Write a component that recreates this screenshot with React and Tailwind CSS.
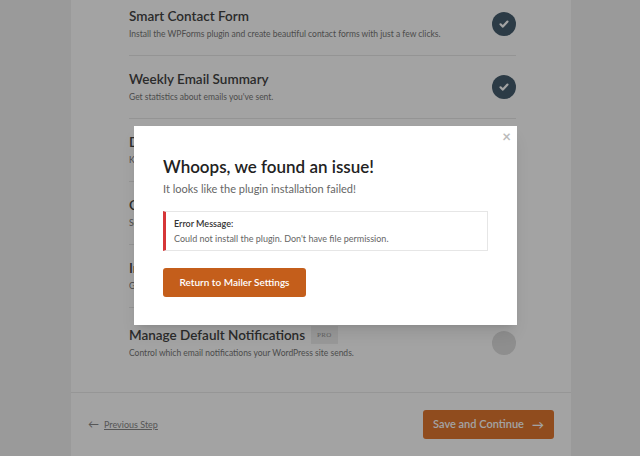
import React from 'react';

const rows = [
  { title: 'Smart Contact Form', desc: 'Install the WPForms plugin and create beautiful contact forms with just a few clicks.', on: true },
  { title: 'Weekly Email Summary', desc: "Get statistics about emails you've sent.", on: true },
  { title: 'Detailed Email Logs', desc: 'Keep records of all emails sent from your WordPress site.', on: true },
  { title: 'Complete Email Reports', desc: 'See the delivery status, track opens and clicks, and create deliverability graphs.', on: true },
  { title: 'Instant Email Alerts', desc: 'Get notifications via email, SMS, Slack, or webhook when emails fail to send.', on: true },
];

const Check = ({ on }) =>
  on ? (
    <div className="w-6 h-6 rounded-full bg-[#465d6e] flex items-center justify-center">
      <svg width="12" height="12" viewBox="0 0 12 12" fill="none" stroke="white" strokeWidth="2.2" strokeLinecap="round" strokeLinejoin="round">
        <path d="M2.5 6.3l2.4 2.3 4.6-5" />
      </svg>
    </div>
  ) : (
    <div className="w-6 h-6 rounded-full bg-[#dedede]" />
  );

const App = () => {
  return (
    <div className="relative w-[640px] h-[456px] overflow-hidden bg-[#f1f1f1]" style={{ fontFamily: 'Lato, "Liberation Sans", sans-serif' }}>
      <div className="mx-[71px] w-[500px] bg-white h-full flex flex-col">
        <div className="pl-[58px] pr-[55px] -mt-[7px]">
          {rows.map((r) => (
            <div key={r.title} className="flex items-center justify-between h-[63px] border-b border-[#e8e8e8]">
              <div>
                <div className="text-[13.5px] font-semibold text-[#444] leading-tight">{r.title}</div>
                <div className="text-[8.5px] text-[#777] mt-[3px]">{r.desc}</div>
              </div>
              <Check on={r.on} />
            </div>
          ))}
          <div className="flex items-center justify-between h-[64px] pt-[6px]">
            <div>
              <div className="flex items-center gap-[6px]">
                <span className="text-[13.5px] font-semibold text-[#444] leading-tight">Manage Default Notifications</span>
                <span className="text-[7px] text-[#999] bg-[#eee] px-[6px] py-[4px] tracking-wider" style={{ fontFamily: '"Liberation Serif", serif' }}>PRO</span>
              </div>
              <div className="text-[8.5px] text-[#777] mt-[3px]">Control which email notifications your WordPress site sends.</div>
            </div>
            <Check on={false} />
          </div>
        </div>
        <div className="mt-[20px] border-t border-[#ebebeb] flex items-center justify-between pl-[17px] pr-[17px] h-[66px]">
          <div className="flex items-center gap-[5px] text-[9px] text-[#888]">
            <span className="text-[11px]">&larr;</span>
            <span className="underline">Previous Step</span>
          </div>
          <div className="w-[131px] h-[29px] rounded-[3px] bg-[#e27730] text-white text-[11px] font-semibold flex items-center justify-center gap-[8px]">
            Save and Continue <span className="text-[12px]">&rarr;</span>
          </div>
        </div>
      </div>

      <div className="absolute inset-0 bg-black/[0.36]" />

      <div className="absolute left-[134px] top-[126px] w-[383px] h-[199px] bg-white shadow-lg px-[29px] pt-[30px]">
        <div className="absolute right-[6px] top-[3px] text-[#bbb] text-[15px] font-bold leading-none">×</div>
        <div className="text-[17px] font-semibold text-[#222] leading-tight">Whoops, we found an issue!</div>
        <div className="text-[11px] text-[#666] mt-[5px] leading-tight">It looks like the plugin installation failed!</div>
        <div className="mt-[15px] w-[325px] h-[40px] border border-[#e6e6e6] border-l-[3px] border-l-[#d63638] pl-[8px] flex flex-col justify-center">
          <div className="text-[9px] font-semibold text-[#333]">Error Message:</div>
          <div className="text-[9px] text-[#666] mt-[1px]">Could not install the plugin. Don't have file permission.</div>
        </div>
        <div className="mt-[17px] w-[143px] h-[29px] rounded-[3px] bg-[#c45e1b] text-white text-[10px] font-semibold flex items-center justify-center">
          Return to Mailer Settings
        </div>
      </div>
    </div>
  );
};

export default App;
